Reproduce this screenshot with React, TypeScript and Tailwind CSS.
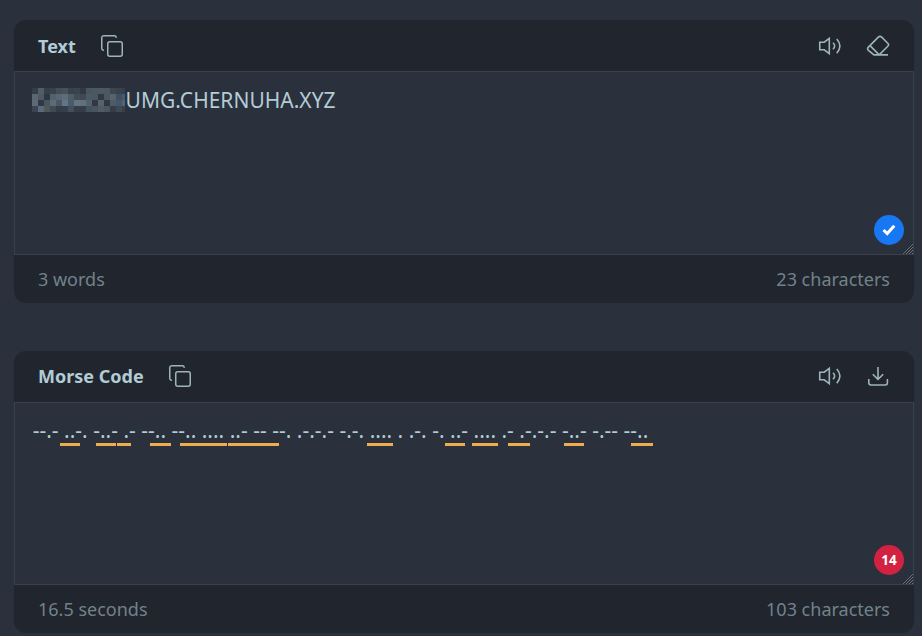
import type { ReactNode } from "react";

const mosaic = [
  ["#343c47", "#505c68", "#373e49", "#38424d", "#424f5a", "#45515c", "#38424d", "#3a444e", "#323945", "#485560", "#4b5864", "#4e5860", "#4b5863", "#3d4650", "#38424d", "#383e48"],
  ["#5a6671", "#4d5a66", "#2f3743", "#53616c", "#596773", "#5e6d7b", "#4e5c68", "#424c57", "#3e4955", "#4c5864", "#4b5863", "#323945", "#4b5863", "#56636d", "#3f4f60", "#4b5863"],
  ["#5e6b76", "#313844", "#495461", "#5c6b76", "#4b5763", "#60758a", "#4c5b69", "#65747e", "#61707a", "#52616e", "#323945", "#56636d", "#303743", "#4e5b67", "#43576a", "#56626c"],
  ["#3b4551", "#5a6c7b", "#515659", "#3f4a56", "#343c48", "#353e4b", "#42505e", "#343d48", "#343c47", "#44515e", "#48545f", "#505b65", "#4a5661", "#343d49", "#3d4955", "#383f48"],
];

const marks = [
  [60, 20], [96, 20], [117, 14], [150, 21], [180, 47], [228, 51],
  [367, 26], [445, 20], [472, 26], [508, 22], [564, 20], [631, 22],
];

const CopyIcon = () => (
  <svg width="24" height="24" viewBox="0 0 24 24" fill="none" stroke="currentColor" strokeWidth="1.5" strokeLinecap="round">
    <path d="M3.3 16.2Q1.75 15.8 1.75 14.3V3.6A1.9 1.9 0 0 1 3.6 1.75H14.6Q15.8 1.75 16.2 3.2" />
    <rect x="7.75" y="7.75" width="14.5" height="14.5" rx="2" />
  </svg>
);

const SoundIcon = () => (
  <svg width="24" height="24" viewBox="0 0 24 24" fill="none" stroke="currentColor" strokeWidth="1.6">
    <path d="M1.75 8.2H6.2L11.3 4.3V19.7L6.2 15.8H1.75Z" />
    <path d="M15 8.8Q18.3 12 15 15.3M18.8 5Q25 12 18.8 19.2" />
  </svg>
);

const EraserIcon = () => (
  <svg width="24" height="24" viewBox="0 0 24 24" fill="none" stroke="currentColor" strokeWidth="1.6">
    <path d="M22 20.9H8L2.4 16.4Q.8 14.8 2.4 13.1L12.3 3.1Q14 1.5 15.7 3.1L21.8 9.2Q23.3 10.7 21.8 12.2L13.2 20.9L4 11.6" />
  </svg>
);

const DownloadIcon = () => (
  <svg width="24" height="24" viewBox="0 0 24 24" fill="none" stroke="currentColor" strokeWidth="1.6">
    <path d="M12 3V15.2M6.8 10.2L12 15.3L17.2 10.2M2.8 15V18.8Q2.8 21 5 21H19.4Q21.4 21 21.4 18.8V15" />
  </svg>
);

const Grip = () => (
  <svg className="absolute right-0 bottom-0" width="11" height="11" viewBox="0 0 11 11" fill="none" strokeWidth="1">
    <path d="M1 11L11 1M4 11L11 4M7 11L11 7M10 11L11 10" stroke="#6f747d" />
    <path d="M0 11L11 0M2.5 11L11 2.5M5.5 11L11 5.5M8.5 11L11 8.5" stroke="#20242b" strokeWidth=".7" />
  </svg>
);

type PanelProps = {
  title: string;
  action: ReactNode;
  left: string;
  right: string;
  badge: ReactNode;
  headerClass: string;
  bodyClass: string;
  children: ReactNode;
};

function Panel({ title, action, left, right, badge, headerClass, bodyClass, children }: PanelProps) {
  return (
    <section className="overflow-hidden rounded-xl bg-[#21252e]">
      <header className={`flex items-center justify-between px-6 text-[#9db4bb] ${headerClass}`}>
        <div className="flex items-center gap-6">
          <h2 className="text-[18px] leading-6 font-bold text-[#b2ccd6]">{title}</h2>
          <CopyIcon />
        </div>
        <div className="flex items-center gap-6">
          <SoundIcon />
          {action}
        </div>
      </header>
      <div className={`relative border border-[#3a414d] bg-[#2a303c] ${bodyClass}`}>
        {children}
        <div className="absolute right-[9px] bottom-[9px]">{badge}</div>
        <Grip />
      </div>
      <footer className="flex h-12 items-center justify-between px-6 text-[18px] text-[#71828b]">
        <span>{left}</span>
        <span>{right}</span>
      </footer>
    </section>
  );
}

export default function App() {
  return (
    <main className="flex h-[636px] w-[922px] flex-col gap-12 overflow-hidden bg-[#2a303c] pt-5 pr-2 pl-3.5 font-['Noto_Sans',sans-serif]">
      <Panel
        title="Text"
        action={<EraserIcon />}
        left="3 words"
        right="23 characters"
        headerClass="h-[51px]"
        bodyClass="h-[184px]"
        badge={
          <div className="flex size-[30px] items-center justify-center rounded-full bg-[#1877f2]">
            <svg width="14" height="12" viewBox="0 0 14 12" fill="none" stroke="white" strokeWidth="3">
              <path d="M1.5 6L5.2 9.5L12.3 1.7" />
            </svg>
          </div>
        }
      >
        <div className="flex items-start pt-4 pl-[17px]">
          <div className="mr-[0.6px] grid w-[93px] grid-cols-[repeat(15,6px)_3px]">
            {mosaic.flat().map((color, i) => (
              <span key={i} className="h-1.5" style={{ backgroundColor: color }} />
            ))}
          </div>
          <span className="text-[21px] leading-6 text-[#b2ccd6]">UMG.CHERNUHA.XYZ</span>
        </div>
      </Panel>
      <Panel
        title="Morse Code"
        action={<DownloadIcon />}
        left="16.5 seconds"
        right="103 characters"
        headerClass="h-[51px] pb-px"
        bodyClass="h-[183px]"
        badge={
          <div className="flex size-[30px] items-center justify-center rounded-full bg-[#d32142] text-[13.5px] font-bold text-white">
            14
          </div>
        }
      >
        <p className="pt-3 pl-[17.7px] text-[21px] leading-[30px] whitespace-nowrap text-[#b2ccd6]">
          --.- ..-. -..- .- --.. --.. .... ..- -- --. .-.-.- -.-. .... . .-. -. ..- .... .- .-.-.- -..- -.-- --..
        </p>
        {marks.map(([x, width]) => (
          <span key={x} className="absolute top-10 h-[3px] bg-[#f0ad4e]" style={{ left: x - 15, width }} />
        ))}
      </Panel>
    </main>
  );
}
